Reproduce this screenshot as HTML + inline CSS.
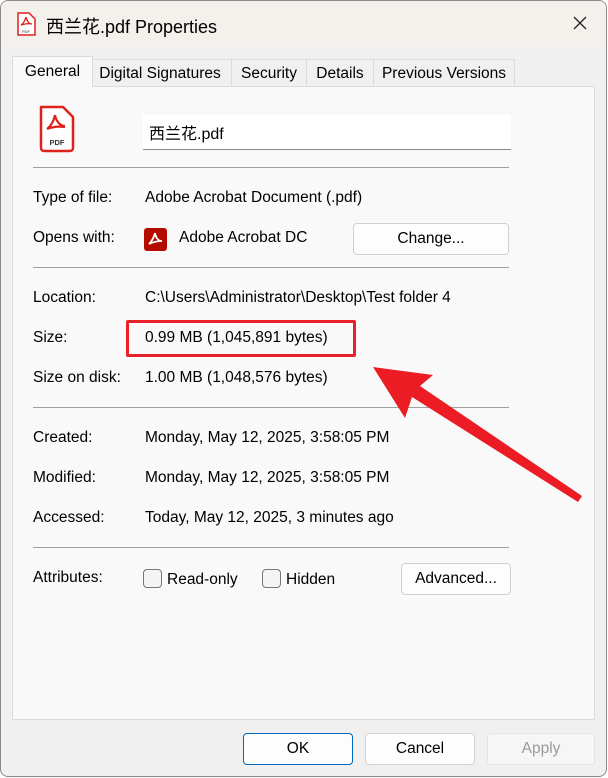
<!DOCTYPE html>
<html><head><meta charset="utf-8"><style>
*{box-sizing:border-box;margin:0;padding:0}
body{width:608px;height:778px;overflow:hidden;background:#fff;font-family:"Liberation Sans","Noto Sans CJK SC",sans-serif;font-size:15.5px;color:#000;position:relative}
.win{position:absolute;left:0;top:0;width:607px;height:777px;border:1px solid #8a8a8a;border-radius:8px;background:#f0f0f0;overflow:hidden}
.title{position:absolute;left:0;top:0;width:100%;height:45px;background:#f4f1ed}
.a{position:absolute;white-space:nowrap}
.tab{position:absolute;top:58px;height:28px;border:1px solid #dadada;border-bottom:none;background:#f0f0f0;padding:5px 0 0;text-align:center}
.panel{position:absolute;left:11px;top:85px;width:583px;height:634px;background:#f9f9f9;border:1px solid #dcdcdc}
.hr{position:absolute;left:32px;width:476px;height:1px;background:#a0a0a0}
.btn{position:absolute;height:32px;border:1px solid #d0d0d0;border-radius:4px;background:#fdfdfd;text-align:center;line-height:30px}
.cb{position:absolute;width:19px;height:19px;border:1px solid #777;border-radius:4px;background:#f4f4f4}
</style></head><body>
<div class="win">
<div class="title"></div>
<svg class="a" style="left:15px;top:11px" width="20" height="25" viewBox="0 0 20 25"><path d="M2 1h11l6 6v16H2z" fill="#fff" stroke="#e0201b" stroke-width="1.5"/><path d="M10 5c-1 3 -2 6 -5 8M10 5c1 4 3 7 6 7M5 13c3-1 7-2 11-1" fill="none" stroke="#e0201b" stroke-width="1.3"/><text x="10" y="21" font-size="4" text-anchor="middle" fill="#333" font-family="Liberation Sans">PDF</text></svg>
<div class="a" style="left:45px;top:12px;font-size:18px">西兰花.pdf Properties</div>
<svg class="a" style="left:572px;top:15px" width="14" height="14"><path d="M1 1L13 13M13 1L1 13" stroke="#222" stroke-width="1.3"/></svg>
<div class="tab" style="left:87px;width:144px">Digital Signatures</div>
<div class="tab" style="left:230px;width:76px">Security</div>
<div class="tab" style="left:305px;width:68px">Details</div>
<div class="tab" style="left:372px;width:142px">Previous Versions</div>
<div class="panel"></div>
<div class="tab" style="left:11px;top:55px;width:81px;height:31px;background:#f9f9f9;border-color:#dcdcdc;padding-top:6px">General</div>
<svg class="a" style="left:37px;top:104px" width="38" height="48" viewBox="0 0 38 48"><path d="M3 2h22l10 10v31a3 3 0 0 1-3 3H6a3 3 0 0 1-3-3z" fill="#fff" stroke="#e0201b" stroke-width="2.5" stroke-linejoin="round"/><path d="M17 10c-1 5-3 10-8 14M17 10c1 6 5 11 10 11M9 24c5-2 11-3 18-2" fill="none" stroke="#e0201b" stroke-width="2.2"/><text x="19" y="40" font-size="7.5" font-weight="bold" text-anchor="middle" fill="#333" font-family="Liberation Sans">PDF</text></svg>
<div class="a" style="left:142px;top:114px;width:368px;height:35px;background:#fff;border-bottom:1px solid #8a8a8a;padding:5px 6px;font-size:16px">西兰花.pdf</div>
<div class="hr" style="top:166px"></div>
<div class="a" style="left:32px;top:188px">Type of file:</div>
<div class="a" style="left:144px;top:188px">Adobe Acrobat Document (.pdf)</div>
<div class="a" style="left:32px;top:228px">Opens with:</div>
<div class="a" style="left:143px;top:227px;width:23px;height:23px;background:#b30b00;border-radius:3px"><svg width="23" height="23" viewBox="0 0 23 23"><path d="M11 5c-1 4-3 8-6 11M11 5c1 5 3 8 7 8M5 16c4-2 9-3 13-3" fill="none" stroke="#fff" stroke-width="1.8"/></svg></div>
<div class="a" style="left:178px;top:228px">Adobe Acrobat DC</div>
<div class="btn" style="left:352px;top:222px;width:156px">Change...</div>
<div class="hr" style="top:266px"></div>
<div class="a" style="left:32px;top:288px">Location:</div>
<div class="a" style="left:144px;top:288px">C:\Users\Administrator\Desktop\Test folder 4</div>
<div class="a" style="left:32px;top:328px">Size:</div>
<div class="a" style="left:144px;top:328px">0.99 MB (1,045,891 bytes)</div>
<div class="a" style="left:125px;top:319px;width:230px;height:37px;border:3px solid #e8202a;border-radius:2px"></div>
<div class="a" style="left:32px;top:368px">Size on disk:</div>
<div class="a" style="left:144px;top:368px">1.00 MB (1,048,576 bytes)</div>
<div class="hr" style="top:406px"></div>
<div class="a" style="left:32px;top:428px">Created:</div>
<div class="a" style="left:144px;top:428px">Monday, May 12, 2025, 3:58:05 PM</div>
<div class="a" style="left:32px;top:468px">Modified:</div>
<div class="a" style="left:144px;top:468px">Monday, May 12, 2025, 3:58:05 PM</div>
<div class="a" style="left:32px;top:508px">Accessed:</div>
<div class="a" style="left:144px;top:508px">Today, May 12, 2025, 3 minutes ago</div>
<div class="hr" style="top:546px"></div>
<div class="a" style="left:32px;top:568px">Attributes:</div>
<div class="cb" style="left:142px;top:568px"></div>
<div class="a" style="left:166px;top:570px">Read-only</div>
<div class="cb" style="left:261px;top:568px"></div>
<div class="a" style="left:285px;top:570px">Hidden</div>
<div class="btn" style="left:400px;top:562px;width:110px">Advanced...</div>
<svg class="a" style="left:-1px;top:-1px" width="608" height="778"><path d="M373 367L433 375L420 386L582 496L578 502L412 397L405 418Z" fill="#ec1c24"/></svg>
<div class="btn" style="left:242px;top:732px;width:110px;border-color:#0067c0">OK</div>
<div class="btn" style="left:364px;top:732px;width:110px">Cancel</div>
<div class="btn" style="left:486px;top:732px;width:108px;color:#9a9a9a;background:#f6f6f6;border-color:#e4e4e4">Apply</div>
</div>
</body></html>
